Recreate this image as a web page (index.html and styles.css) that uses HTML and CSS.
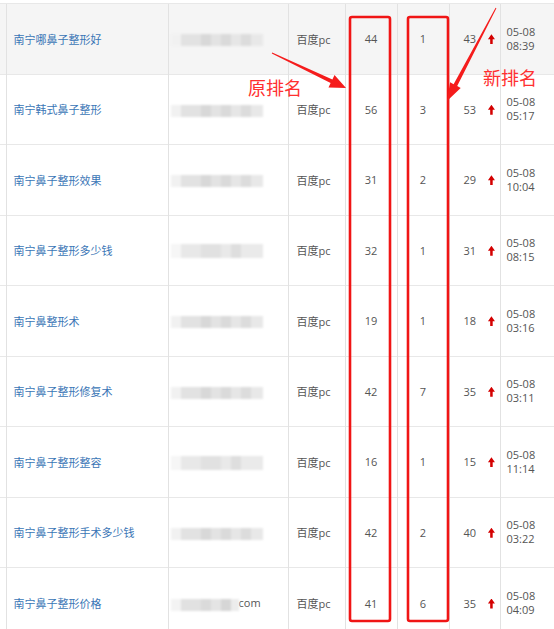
FILE: index.html
```html
<!DOCTYPE html>
<html lang="zh-CN">
<head>
  <meta charset="UTF-8">
  <meta name="viewport" content="width=device-width, initial-scale=1">
  <title>排名变化</title>
  <link rel="stylesheet" href="styles.css">
</head>
<body>
  <div class="page">
    <table class="rank">
      <colgroup>
        <col class="c-edge">
        <col class="c-word">
        <col class="c-site">
        <col class="c-engine">
        <col class="c-num">
        <col class="c-num">
        <col class="c-now">
        <col class="c-time">
      </colgroup>
      <tbody>
        <tr class="hover">
          <td></td>
          <td><a href="#">南宁哪鼻子整形好</a></td>
          <td><span class="mosaic m1"></span></td>
          <td>百度pc</td>
          <td class="num">44</td>
          <td class="num">1</td>
          <td class="now">43 <i class="up"></i></td>
          <td class="time">05-08<br>08:39</td>
        </tr>
        <tr>
          <td></td>
          <td><a href="#">南宁韩式鼻子整形</a></td>
          <td><span class="mosaic m2"></span></td>
          <td>百度pc</td>
          <td class="num">56</td>
          <td class="num">3</td>
          <td class="now">53 <i class="up"></i></td>
          <td class="time">05-08<br>05:17</td>
        </tr>
        <tr>
          <td></td>
          <td><a href="#">南宁鼻子整形效果</a></td>
          <td><span class="mosaic m1"></span></td>
          <td>百度pc</td>
          <td class="num">31</td>
          <td class="num">2</td>
          <td class="now">29 <i class="up"></i></td>
          <td class="time">05-08<br>10:04</td>
        </tr>
        <tr>
          <td></td>
          <td><a href="#">南宁鼻子整形多少钱</a></td>
          <td><span class="mosaic m3"></span></td>
          <td>百度pc</td>
          <td class="num">32</td>
          <td class="num">1</td>
          <td class="now">31 <i class="up"></i></td>
          <td class="time">05-08<br>08:15</td>
        </tr>
        <tr>
          <td></td>
          <td><a href="#">南宁鼻整形术</a></td>
          <td><span class="mosaic m2"></span></td>
          <td>百度pc</td>
          <td class="num">19</td>
          <td class="num">1</td>
          <td class="now">18 <i class="up"></i></td>
          <td class="time">05-08<br>03:16</td>
        </tr>
        <tr>
          <td></td>
          <td><a href="#">南宁鼻子整形修复术</a></td>
          <td><span class="mosaic m1"></span></td>
          <td>百度pc</td>
          <td class="num">42</td>
          <td class="num">7</td>
          <td class="now">35 <i class="up"></i></td>
          <td class="time">05-08<br>03:11</td>
        </tr>
        <tr>
          <td></td>
          <td><a href="#">南宁鼻子整形整容</a></td>
          <td><span class="mosaic m3"></span></td>
          <td>百度pc</td>
          <td class="num">16</td>
          <td class="num">1</td>
          <td class="now">15 <i class="up"></i></td>
          <td class="time">05-08<br>11:14</td>
        </tr>
        <tr>
          <td></td>
          <td><a href="#">南宁鼻子整形手术多少钱</a></td>
          <td><span class="mosaic m2"></span></td>
          <td>百度pc</td>
          <td class="num">42</td>
          <td class="num">2</td>
          <td class="now">40 <i class="up"></i></td>
          <td class="time">05-08<br>03:22</td>
        </tr>
        <tr>
          <td></td>
          <td><a href="#">南宁鼻子整形价格</a></td>
          <td><span class="mosaic m4"></span>com</td>
          <td>百度pc</td>
          <td class="num">41</td>
          <td class="num">6</td>
          <td class="now">35 <i class="up"></i></td>
          <td class="time">05-08<br>04:09</td>
        </tr>
      </tbody>
    </table>

    <!-- 标注层 -->
    <svg class="marks" width="554" height="629" viewBox="0 0 554 629">
      <rect x="350" y="17" width="40" height="604" rx="2" />
      <rect x="408" y="17" width="40" height="604" rx="2" />
      <polygon class="arrow" points="271.8,53.4 330.6,83 328.5,87.5 346,88 334.5,74.9 332.4,79.4 272.2,52.6" />
      <polygon class="arrow" points="495.6,7.8 453.6,84.2 450.1,82.3 447,101 460.7,87.9 457.2,86 496.4,8.2" />
      <text x="248" y="95">原排名</text>
      <text x="483" y="85">新排名</text>
    </svg>
  </div>
</body>
</html>
```

FILE: styles.css
```css
body {
  margin: 0;
  background-color: #fff;
  color: #555;
  font-family: 'Open Sans', 'Noto Sans CJK SC', sans-serif;
  font-size: 11px;
  overflow: hidden;
}
.page {
  position: relative;
  width: 554px;
  height: 629px;
  overflow: hidden;
}
.rank {
  border-collapse: collapse;
  table-layout: fixed;
  width: 562px;
  margin-top: 3px;
}
.c-edge { width: 6px; }
.c-word { width: 162px; }
.c-site { width: 120px; }
.c-engine { width: 57px; }
.c-num { width: 52px; }
.c-now { width: 51px; }
.c-time { width: 62px; }
.rank tr {
  height: 70.5px;
}
.rank td {
  border-top: 1px solid #e8e8e8;
  border-left: 1px solid #e2e2e2;
  padding: 0 7px;
  vertical-align: middle;
  white-space: nowrap;
  overflow: hidden;
}
.rank td:first-child {
  border-left: none;
  padding: 0;
}
.rank tr.hover td {
  background-color: #f5f5f5;
}
.rank a {
  color: #3a76b6;
  text-decoration: none;
}
.rank td:nth-child(3) {
  padding-left: 2px;
}
.rank td:nth-child(4) {
  padding-left: 8px;
}
.num {
  text-align: center;
}
.rank td.now {
  padding-left: 14px;
}
.up {
  display: inline-block;
  width: 7px;
  height: 10px;
  margin-left: 9px;
  vertical-align: -1px;
  background-color: #d40000;
  clip-path: polygon(50% 0, 100% 50%, 68% 50%, 68% 100%, 32% 100%, 32% 50%, 0 50%);
}
.rank td.time {
  padding-left: 6px;
  line-height: 14px;
}
.mosaic {
  display: inline-block;
  height: 12px;
  vertical-align: middle;
  filter: blur(0.8px);
}
.m1, .m2 {
  width: 92px;
  background: linear-gradient(90deg, #f1f1f1 0 10px, #e2e2e2 10px 30px, #d8d8d8 30px 40px, #e3e3e3 40px 50px, #dadada 50px 60px, #e6e6e6 60px 70px, #dcdcdc 70px 80px, #e8e8e8 80px 92px);
}
.m3 {
  width: 92px;
  height: 14px;
  background: linear-gradient(90deg, #f6f6f6 0 10px, #e8e8e8 10px 30px, #e1e1e1 30px 50px, #e9e9e9 50px 60px, #dedede 60px 70px, #eaeaea 70px 92px);
}
.m4 {
  width: 68px;
  background: linear-gradient(90deg, #f3f3f3 0 10px, #e1e1e1 10px 30px, #dadada 30px 40px, #e4e4e4 40px 50px, #d6d6d6 50px 60px, #ececec 60px 68px);
}
.marks {
  position: absolute;
  left: 0;
  top: 0;
  pointer-events: none;
}
.marks rect {
  fill: none;
  stroke: #f01515;
  stroke-width: 2.6;
}
.marks .arrow {
  fill: #f51c1c;
}
.marks text {
  fill: #ff3030;
  font-family: 'Noto Sans CJK SC', sans-serif;
  font-size: 18px;
}
```
